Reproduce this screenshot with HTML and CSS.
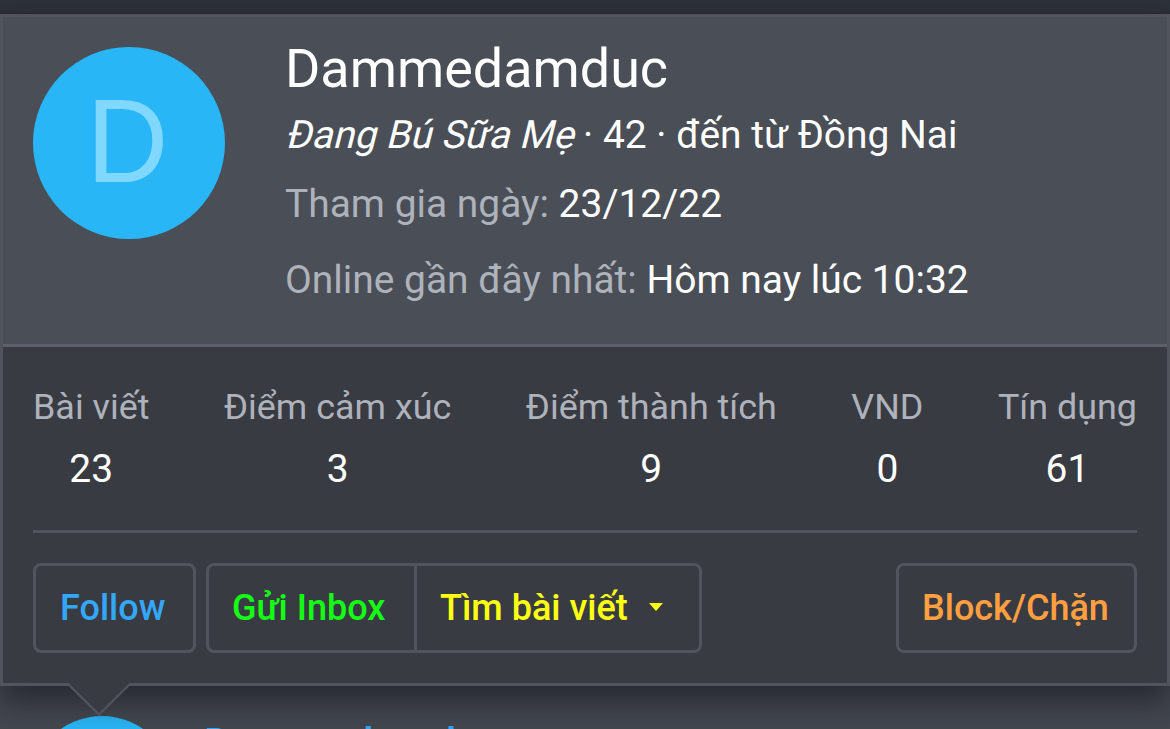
FILE: index.html
```html
<!DOCTYPE html>
<html lang="vi">
<head>
<meta charset="utf-8">
<title>Dammedamduc</title>
<link rel="stylesheet" href="styles.css">
</head>
<body>
<div class="topbar"></div>
<section class="card">
  <header class="card-head">
    <div class="avatar"><span class="initial">D</span></div>
    <div class="info">
      <h1 class="name">Dammedamduc</h1>
      <div class="blurb"><em class="rank">Đang Bú Sữa Mẹ</em> · 42 · đến từ Đồng Nai</div>
      <div class="joined"><span class="muted">Tham gia ngày:</span> 23/12/22</div>
      <div class="seen"><span class="muted">Online gần đây nhất:</span> Hôm nay lúc 10:32</div>
    </div>
  </header>
  <div class="card-body">
    <dl class="stats">
      <div><dt>Bài viết</dt><dd>23</dd></div>
      <div><dt>Điểm cảm xúc</dt><dd>3</dd></div>
      <div><dt>Điểm thành tích</dt><dd>9</dd></div>
      <div><dt>VND</dt><dd>0</dd></div>
      <div><dt>Tín dụng</dt><dd>61</dd></div>
    </dl>
    <hr class="rule">
    <div class="actions">
      <a class="btn follow">Follow</a>
      <div class="group">
        <a class="btn inbox">Gửi Inbox</a>
        <a class="btn find">Tìm bài viết<svg class="caret" width="14" height="8" viewBox="0 0 14 8"><path d="M0 0h14L7 8z" fill="currentColor"/></svg></a>
      </div>
      <a class="btn block">Block/Chặn</a>
    </div>
  </div>
  <svg class="arrow" width="66" height="34" viewBox="0 0 66 34"><path class="arrow-fill" d="M3 0H63V3L33 33L3 3z"/><path class="arrow-line" d="M1.500 1.500L33 32.500L64.500 1.500"/></svg>
</section>
<article class="post">
  <div class="post-avatar"></div>
  <a class="post-name">Dammedamduc</a>
</article>
</body>
</html>
```
FILE: styles.css
```css
* { box-sizing: border-box; }
body {
  margin: 0;
  width: 1170px;
  height: 729px;
  overflow: hidden;
  display: flex;
  flex-direction: column;
  background: #43474e;
  color: #fff;
  font-family: Roboto, "Noto Sans", sans-serif;
  font-size: 38.95px;
}
.topbar {
  flex: none;
  height: 14px;
  background: linear-gradient(#2d3139 0 11px, #282b33 14px);
}
.card {
  flex: none;
  position: relative;
  z-index: 1;
  height: 672px;
  border: 3px solid #51545c;
  background: #393b43;
  box-shadow: 0 15px 30px rgba(20, 20, 30, .6);
}
.card-head {
  display: flex;
  gap: 60px;
  height: 330px;
  padding: 30px 30px 0;
  background: #4a4e56;
  border-bottom: 3px solid #5d6068;
}
.avatar {
  flex: none;
  width: 192px;
  height: 192px;
  border-radius: 50%;
  background: #29b6f6;
  color: #81d8ff;
  font: 115px/188px "Liberation Sans", Arial, sans-serif;
  text-align: center;
}
.initial { display: inline-block; transform: translateX(-1px) scale(.985, 1.036); }
.info { white-space: nowrap; line-height: 56px; }
.name { margin: 0; font-size: 53.9px; font-weight: 400; line-height: 44px; }
.blurb { margin-top: 16px; }
.rank {
  display: inline-block;
  font-style: normal;
  transform: skewX(-14deg);
  transform-origin: 0 41px;
}
.joined { margin-top: 13px; }
.seen { margin-top: 20px; }
.muted { color: #aeb2bb; }
.card-body { padding: 35px 30px 0; }
.stats {
  display: flex;
  justify-content: space-between;
  margin: 0;
  text-align: center;
  line-height: 50px;
  white-space: nowrap;
}
.stats dt { font-size: 35.9px; color: #aeb2bb; }
.stats dd { margin: 12px 0 0; }
.rule { height: 3px; margin: 36px 0 30px; border: 0; background: #51545c; }
.actions { display: flex; gap: 10px; }
.group { display: flex; }
.btn {
  display: flex;
  align-items: center;
  height: 90px;
  padding: 0 24px;
  border: 3px solid #51545c;
  border-radius: 8px;
  font-size: 36px;
  font-weight: 500;
  white-space: nowrap;
}
.follow { width: 163px; color: #33a7f8; }
.inbox { width: 211px; padding-left: 23px; color: #14ff14; border-radius: 8px 0 0 8px; }
.find { width: 285px; padding-left: 23px; color: #ffff14; border-left: 0; border-radius: 0 8px 8px 0; }
.caret { margin: 0 0 2px 21px; }
.block { width: 241px; margin-left: auto; padding-left: 23px; color: #ff9f40; }
.arrow { position: absolute; left: 63px; top: 665px; }
.arrow-fill { fill: #393b43; }
.arrow-line { fill: none; stroke: #51545c; stroke-width: 2.200; }
.post { display: flex; gap: 30px; padding: 30px 30px 0; }
.post-avatar { flex: none; width: 144px; height: 144px; border-radius: 50%; background: #29b6f6; }
.post-name { color: #33a7f8; font-size: 42px; font-weight: 500; line-height: 56px; }
```
